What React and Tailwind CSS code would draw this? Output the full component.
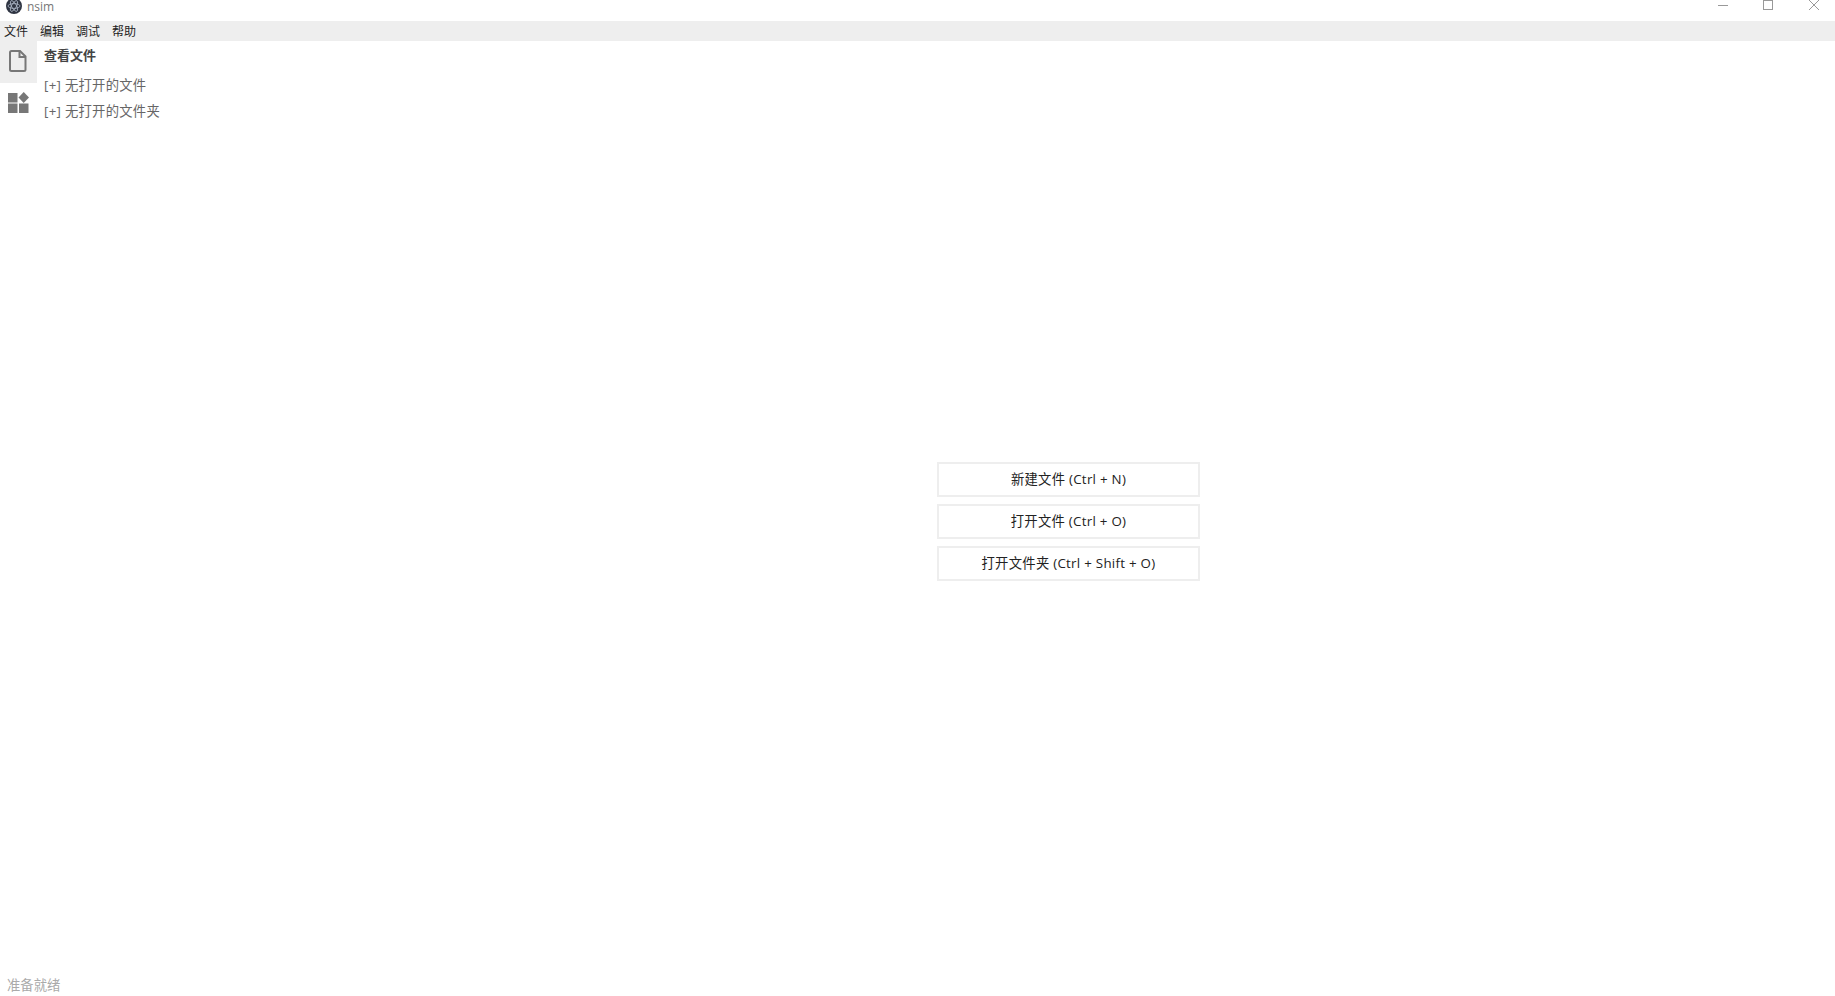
import React from "react";

function Btn({ children }) {
  return (
    <button className="w-[263px] h-[35px] border-2 border-[#eeeeee] bg-white text-[13.33px] tracking-[0.27px] text-[#222222] flex items-center justify-center">
      {children}
    </button>
  );
}

export default function App() {
  return (
    <div className="w-[1835px] h-[996px] overflow-hidden bg-white flex flex-col relative font-['Open_Sans','Noto_Sans_CJK_SC',sans-serif]">
      <div className="h-[21px] flex items-start shrink-0 overflow-hidden">
        <svg width="16" height="16" viewBox="0 0 16 16" className="ml-[6px] -mt-[2px]">
          <circle cx="8" cy="8" r="8" fill="#2f3542" />
          <g fill="none" stroke="#aeb8c8" strokeWidth="0.8">
            <ellipse cx="8" cy="8" rx="6" ry="2.4" />
            <ellipse cx="8" cy="8" rx="6" ry="2.4" transform="rotate(60 8 8)" />
            <ellipse cx="8" cy="8" rx="6" ry="2.4" transform="rotate(120 8 8)" />
          </g>
        </svg>
        <span className="ml-[5px] text-[12px] leading-[13px] text-[#777777]">nsim</span>
        <div className="ml-auto flex items-start">
          <svg width="12" height="12" viewBox="0 0 12 12" className="mr-[33px]"><path d="M1 5.5H11" stroke="#999" strokeWidth="1" /></svg>
          <svg width="12" height="12" viewBox="0 0 12 12" className="mr-[34px]"><rect x="1.5" y="0.5" width="9" height="9" fill="none" stroke="#999" strokeWidth="1" /></svg>
          <svg width="12" height="12" viewBox="0 0 12 12" className="mr-[15px]"><path d="M1 0L11 10M11 0L1 10" stroke="#999" strokeWidth="1" /></svg>
        </div>
      </div>
      <div className="h-[20px] bg-[#eeeeee] flex items-center shrink-0 text-[12px] text-[#222222] pl-[4px] gap-[12px] pt-[2px]">
        <span>文件</span><span>编辑</span><span>调试</span><span>帮助</span>
      </div>
      <div className="flex-1 flex min-h-0">
        <div className="w-[37px] shrink-0 flex flex-col">
          <div className="h-[42px] bg-[#eeeeee] flex items-center justify-center pr-[2px] pb-[2px]">
            <svg width="18" height="22" viewBox="0 0 18 22">
              <path d="M2.5 1H11L16.5 6.5V19.5C16.5 20.3 16 21 15 21H2.5C1.7 21 1 20.3 1 19.5V2.5C1 1.7 1.7 1 2.5 1Z" fill="none" stroke="#777" strokeWidth="2" />
              <path d="M10.5 1V7H16.5" fill="none" stroke="#777" strokeWidth="2" />
            </svg>
          </div>
          <div className="h-[42px] flex items-center justify-center pb-[4px]">
            <svg width="21" height="21" viewBox="0 0 21 21" fill="#777">
              <rect x="0" y="1" width="9.5" height="9.5" />
              <path d="M15.7 0L21 5.5L15.7 11L10.5 5.5Z" />
              <rect x="0" y="11.5" width="9.5" height="9.5" />
              <rect x="11" y="11.5" width="9.5" height="9.5" />
            </svg>
          </div>
        </div>
        <div className="w-[265px] shrink-0 pl-[7px] text-[13.33px] tracking-[0.27px] text-[#666666]">
          <div className="font-semibold text-[13px] tracking-normal text-[#444444] mt-[4px] leading-[20px]">查看文件</div>
          <div className="mt-[10px] leading-[20px]">[+] 无打开的文件</div>
          <div className="mt-[6px] leading-[20px]">[+] 无打开的文件夹</div>
        </div>
        <div className="flex-1 flex flex-col items-center justify-center gap-[7px] pt-[6px]">
          <Btn>新建文件 (Ctrl + N)</Btn>
          <Btn>打开文件 (Ctrl + O)</Btn>
          <Btn>打开文件夹 (Ctrl + Shift + O)</Btn>
        </div>
      </div>
      <div className="absolute left-[7px] bottom-[1px] text-[13.33px] text-[#aaaaaa] leading-[20px]">准备就绪</div>
    </div>
  );
}
